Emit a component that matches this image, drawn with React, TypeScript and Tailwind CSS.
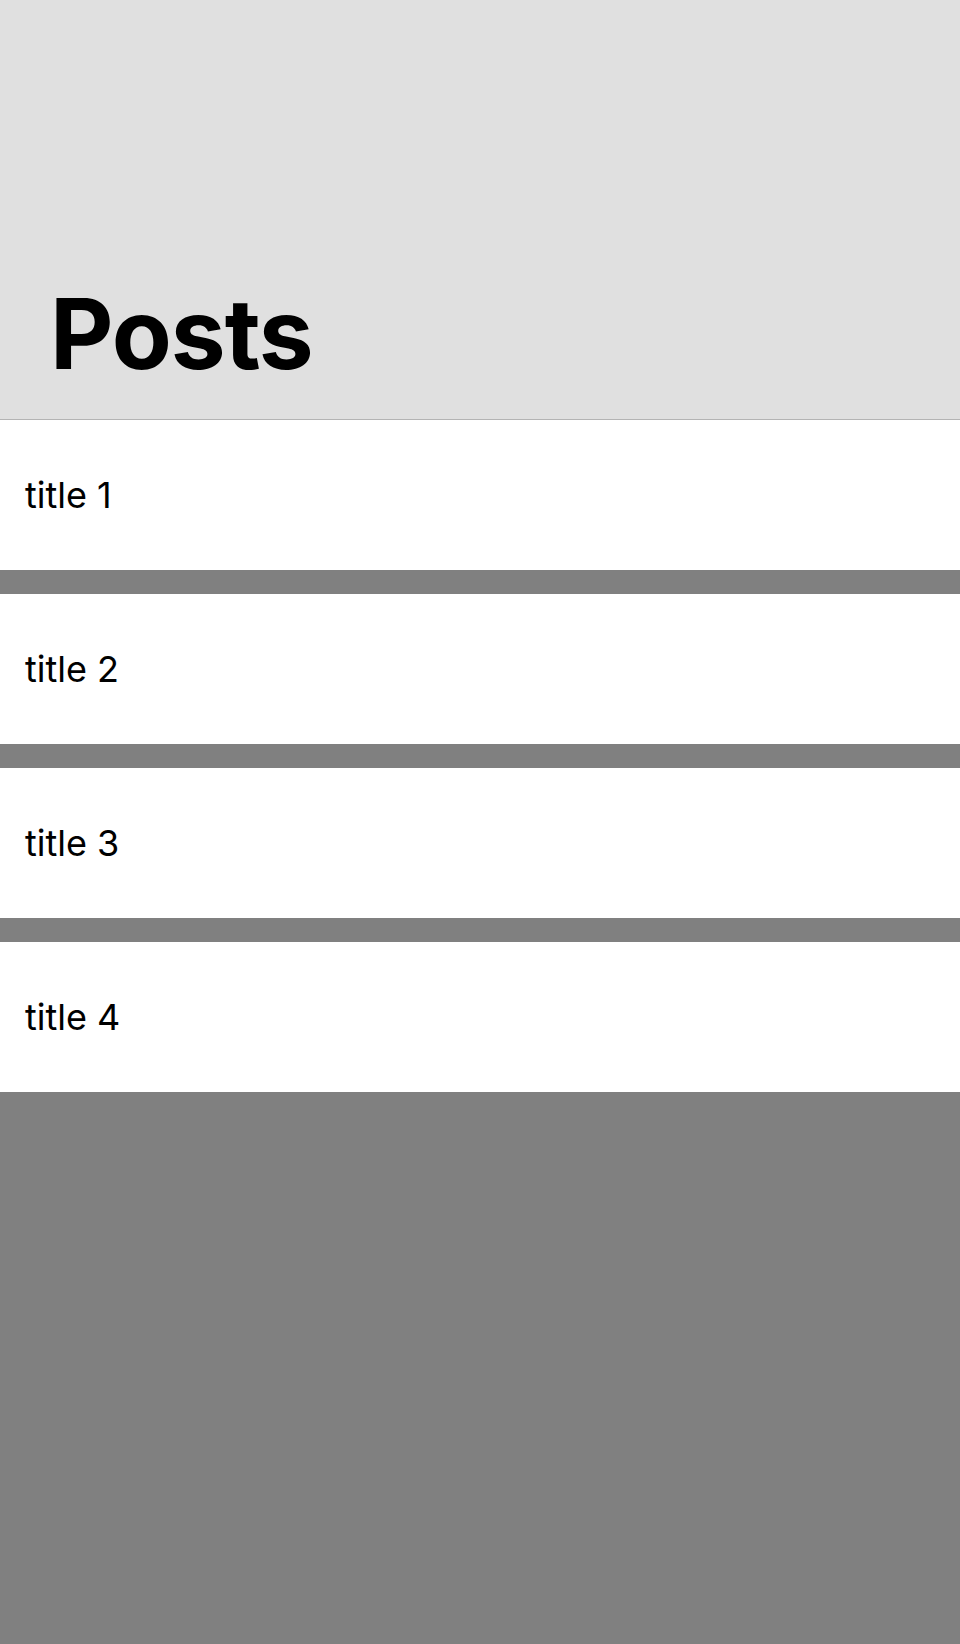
const posts = [
  { id: 1, title: "title 1" },
  { id: 2, title: "title 2" },
  { id: 3, title: "title 3" },
  { id: 4, title: "title 4" },
]

function PostRow({ title }: { title: string }) {
  return (
    <div className="flex h-[150px] items-center bg-white px-[25px]">
      <span className="text-[36px] leading-none text-black">{title}</span>
    </div>
  )
}

export default function App() {
  return (
    <div
      className="flex min-h-[1644px] w-full flex-col bg-[#808080]"
      style={{ fontFamily: "Inter, 'Noto Sans', sans-serif" }}
    >
      <header className="flex h-[420px] items-end border-b border-[#b4b4b4] bg-[#e0e0e0] px-[50px] pb-[36px]">
        <h1 className="text-[98px] leading-none font-bold tracking-[-1px] text-black">
          Posts
        </h1>
      </header>
      <div className="flex flex-col gap-[24px]">
        {posts.map((post) => (
          <PostRow key={post.id} title={post.title} />
        ))}
      </div>
    </div>
  )
}
